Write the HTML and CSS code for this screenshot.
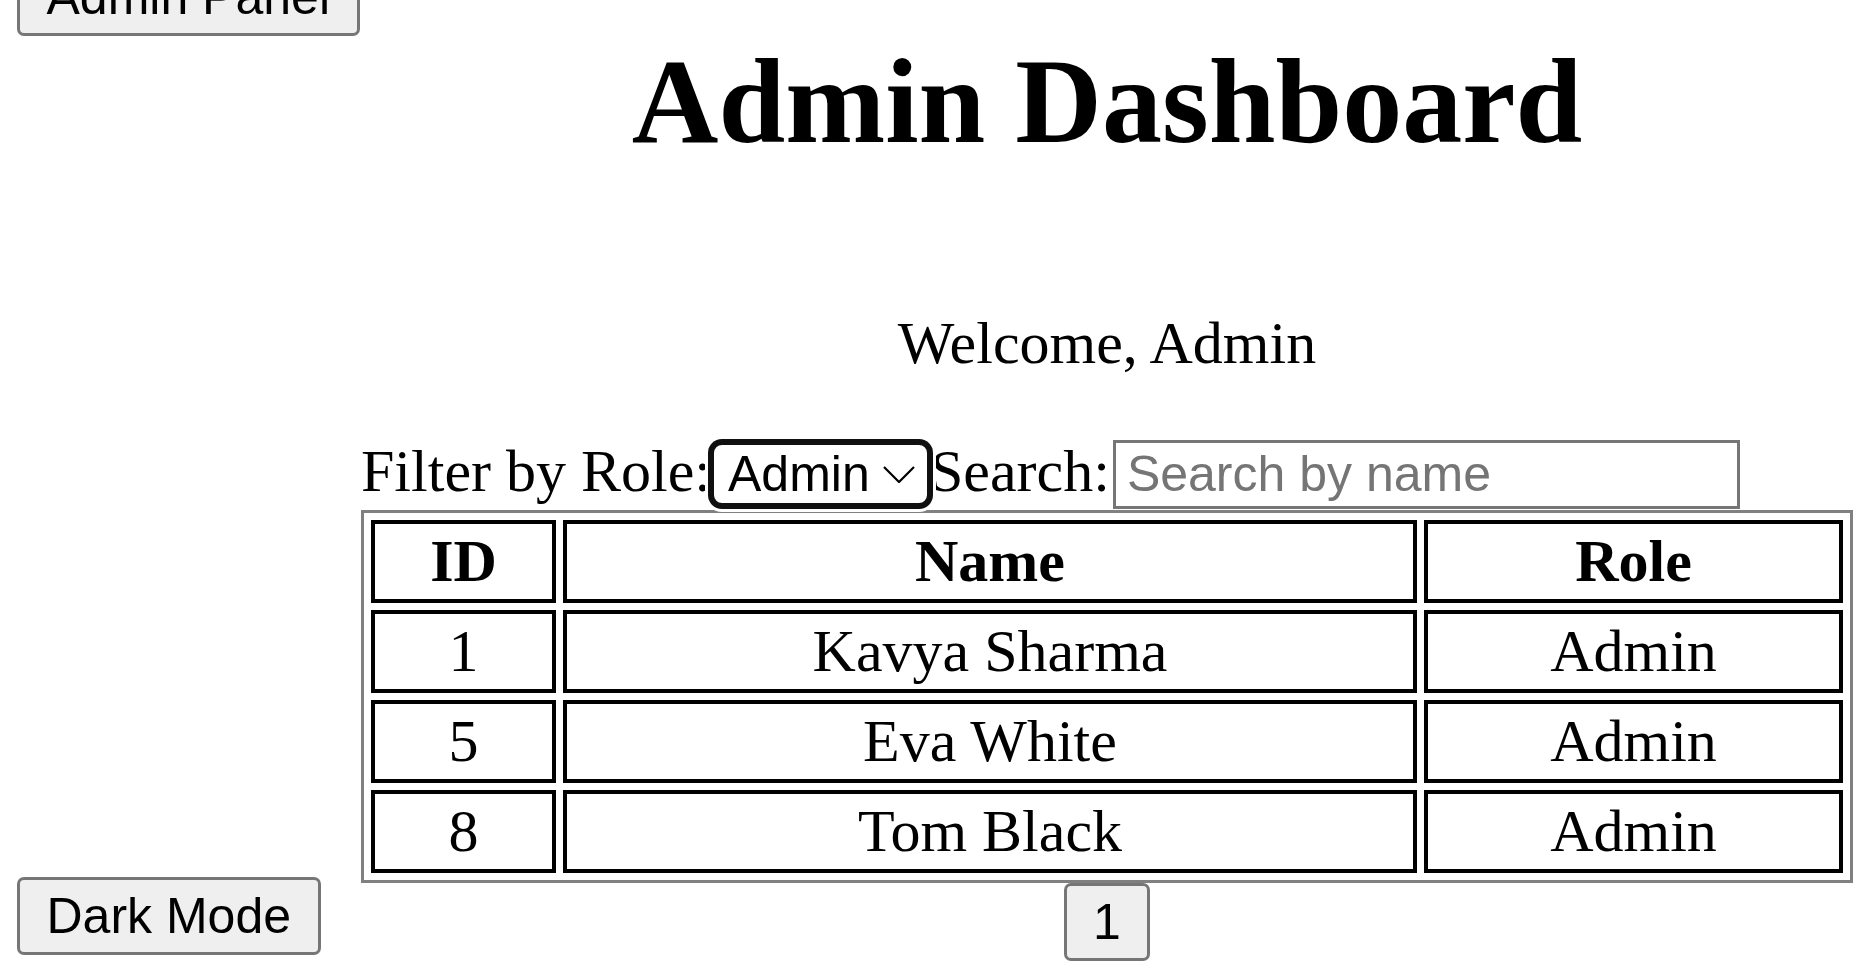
FILE: index.html
```html
<!DOCTYPE html>
<html lang="en">
<head>
<meta charset="utf-8">
<title>Admin Dashboard</title>
<link rel="stylesheet" href="styles.css">
</head>
<body>
<div class="page">
  <aside class="sidebar">
    <button class="btn">Admin Panel</button>
    <button class="btn">Dark Mode</button>
  </aside>
  <main class="main">
    <h1 class="title">Admin Dashboard</h1>
    <p class="welcome">Welcome, Admin</p>
    <div class="filters">
      <label class="filter-label" for="role">Filter by Role:</label>
      <div class="select-box">
        <select id="role" class="select">
          <option>All</option>
          <option selected>Admin</option>
          <option>User</option>
        </select>
        <svg class="chevron" width="32" height="17" viewBox="0 0 32 17" aria-hidden="true"><path d="M1 1 L16 16 L31 1" fill="none" stroke="#000" stroke-width="2.2"/></svg>
      </div>
      <label class="filter-label" for="search">Search:</label>
      <input id="search" class="search" type="text" placeholder="Search by name">
    </div>
    <table class="users">
      <thead>
        <tr>
          <th class="col-id">ID</th>
          <th class="col-name">Name</th>
          <th class="col-role">Role</th>
        </tr>
      </thead>
      <tbody>
        <tr><td>1</td><td>Kavya Sharma</td><td>Admin</td></tr>
        <tr><td>5</td><td>Eva White</td><td>Admin</td></tr>
        <tr><td>8</td><td>Tom Black</td><td>Admin</td></tr>
      </tbody>
    </table>
    <div class="pagination"><button class="btn page-btn">1</button></div>
  </main>
</div>
</body>
</html>
```

FILE: styles.css
```css
html, body {
  margin: 0;
  background: #fff;
}

body {
  font-family: "Liberation Serif", "Times New Roman", serif;
  color: #000;
}

.page {
  display: grid;
  grid-template-columns: 361px 1492px;
  margin-top: -42px;
}

.sidebar {
  display: flex;
  flex-direction: column;
  justify-content: space-between;
  align-items: flex-start;
  padding: 0 0 6px 17px;
}

.btn {
  font-family: "Liberation Sans", Arial, sans-serif;
  font-size: 50px;
  line-height: normal;
  height: 78px;
  padding: 0 26.5px;
  box-sizing: border-box;
  background: #efefef;
  color: #000;
  border: 3px solid #767676;
  border-radius: 7px;
}

.title {
  margin: 75px 0 0;
  font-size: 120px;
  font-weight: bold;
  line-height: normal;
  text-align: center;
}

.welcome {
  margin: 138px 0 59px;
  font-size: 60px;
  line-height: normal;
  text-align: center;
}

.filters {
  display: flex;
  align-items: baseline;
  font-size: 60px;
  line-height: normal;
}

.select-box {
  position: relative;
  z-index: 1;
  display: flex;
  align-items: center;
  width: 219px;
  height: 64px;
  box-sizing: border-box;
  border: 3px solid #101010;
  border-radius: 11px;
  box-shadow: 0 0 0 3px #101010, 0 0 0 6px #fff;
  background: #fff;
}

.select {
  -webkit-appearance: none;
  appearance: none;
  flex: 1;
  min-width: 0;
  height: 58px;
  padding: 0 0 0 14px;
  border: 0;
  outline: none;
  background: transparent;
  color: #000;
  font-family: "Liberation Sans", Arial, sans-serif;
  font-size: 50px;
}

.chevron {
  flex: none;
  margin-right: 12px;
}

.search {
  margin-left: 3px;
  width: 627px;
  height: 69px;
  box-sizing: border-box;
  padding: 0 11px;
  border: 3px solid #767676;
  font-family: "Liberation Sans", Arial, sans-serif;
  font-size: 50px;
  color: #000;
}

.search::placeholder {
  color: #757575;
}

.users {
  width: 100%;
  margin-top: 1px;
  table-layout: fixed;
  border: 3px solid #808080;
  border-spacing: 7px;
  font-size: 60px;
}

.users th,
.users td {
  box-sizing: border-box;
  border: 4px solid #000;
  padding: 3px;
  line-height: 69px;
  text-align: center;
}

.users th {
  font-weight: bold;
}

.col-id { width: 185px; }
.col-name { width: 854px; }
.col-role { width: 419px; }

.pagination {
  display: flex;
  justify-content: center;
  margin-top: 0;
}

.page-btn {
  padding: 0 26px;
}
```
